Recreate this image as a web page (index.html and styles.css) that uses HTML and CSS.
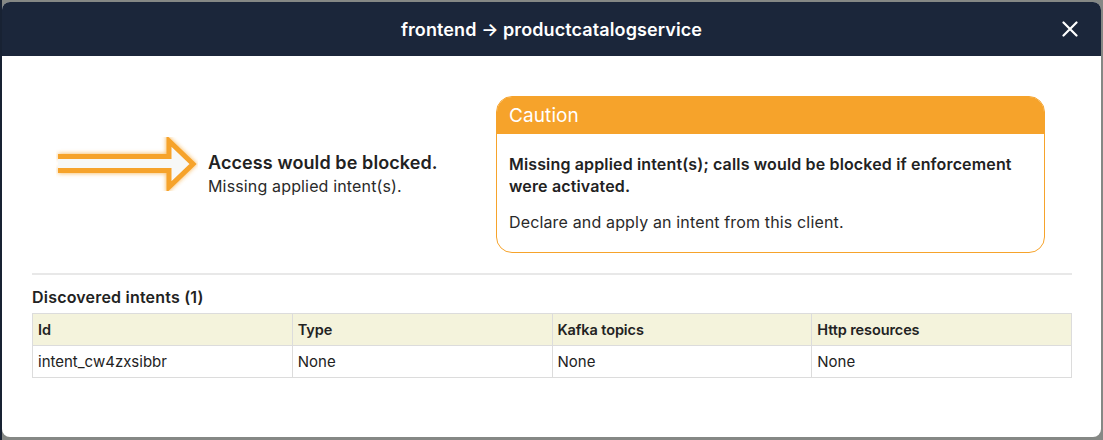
FILE: index.html
```html
<!DOCTYPE html>
<html>
<head>
<meta charset="utf-8">
<link rel="stylesheet" href="styles.css">
</head>
<body>
<div class="backdrop">
  <div class="modal">
    <div class="modal-header">
      <div class="modal-title">frontend → productcatalogservice</div>
      <button class="close" aria-label="Close">
        <svg width="16" height="16" viewBox="0 0 16 16"><path d="M1.5 1.5 L14.5 14.5 M14.5 1.5 L1.5 14.5" stroke="#fff" stroke-width="2.2" stroke-linecap="round"/></svg>
      </button>
    </div>
    <div class="modal-body">
      <div class="top">
        <div class="status">
          <svg class="arrow" width="142" height="54" viewBox="0 0 142 54">
            <defs>
              <filter id="glow" x="-20%" y="-50%" width="140%" height="200%">
                <feGaussianBlur stdDeviation="2"/>
              </filter>
            </defs>
            <path d="M2 19.5 H113 V4 L137 27 L113 50 V33.5 H2" fill="none" stroke="#f6a32b" stroke-width="6" filter="url(#glow)" opacity="0.7"/>
            <path d="M2 19.5 H113 V4 L137 27 L113 50 V33.5 H2" fill="#f7f8f7" stroke="#f6a32b" stroke-width="5"/>
          </svg>
          <div class="status-text">
            <div class="status-title">Access would be blocked.</div>
            <div class="status-sub">Missing applied intent(s).</div>
          </div>
        </div>
        <div class="caution">
          <div class="caution-head">Caution</div>
          <div class="caution-body">
            <p class="caution-strong">Missing applied intent(s); calls would be blocked if enforcement were activated.</p>
            <p class="caution-text">Declare and apply an intent from this client.</p>
          </div>
        </div>
      </div>
      <hr class="divider">
      <h3 class="section-title">Discovered intents (1)</h3>
      <table class="intents">
        <thead>
          <tr><th>Id</th><th>Type</th><th>Kafka topics</th><th>Http resources</th></tr>
        </thead>
        <tbody>
          <tr><td>intent_cw4zxsibbr</td><td>None</td><td>None</td><td>None</td></tr>
        </tbody>
      </table>
    </div>
  </div>
</div>
</body>
</html>
```
FILE: styles.css
```css
html, body {
  margin: 0;
  padding: 0;
}
body {
  width: 1103px;
  height: 440px;
  overflow: hidden;
  background: #858885;
  font-family: Inter, "Noto Sans", sans-serif;
  color: #222;
}
.backdrop {
  padding: 2px 2px 3px 2px;
  background: linear-gradient(90deg, #182233 0, #182233 2px, #858885 2px);
  height: 440px;
  box-sizing: border-box;
}
.modal {
  height: 435px;
  background: #fff;
  border-radius: 8px;
  overflow: hidden;
  display: flex;
  flex-direction: column;
}
.modal-header {
  height: 54px;
  flex: none;
  background: #1b263a;
  display: flex;
  align-items: center;
  justify-content: center;
  position: relative;
}
.modal-title {
  color: #fff;
  font-size: 18px;
  font-weight: 600;
  letter-spacing: 0.1px;
}
.close {
  position: absolute;
  right: 23px;
  top: 19px;
  background: none;
  border: 0;
  padding: 0;
  width: 16px;
  height: 16px;
  display: block;
}
.close svg { display: block; }
.modal-body {
  padding: 40px 29px 0 30px;
}
.top {
  display: flex;
  align-items: flex-start;
  height: 177px;
}
.status {
  display: flex;
  align-items: flex-start;
  margin-top: 41px;
  margin-left: 24px;
  width: 440px;
}
.arrow {
  display: block;
  flex: none;
  margin-right: 10px;
}
.status-text {
  margin-top: 14px;
}
.status-title {
  font-size: 18px;
  font-weight: 600;
  line-height: 24px;
  letter-spacing: 0.1px;
}
.status-sub {
  font-size: 16px;
  line-height: 22px;
  letter-spacing: 0.15px;
  color: #2a2a2a;
}
.caution {
  width: 549px;
  height: 157px;
  box-sizing: border-box;
  border: 1px solid #f6a32b;
  border-radius: 16px;
  overflow: hidden;
}
.caution-head {
  background: #f6a32b;
  color: #fff;
  font-size: 19px;
  line-height: 38px;
  height: 37px;
  padding-left: 12px;
  letter-spacing: 0.1px;
}
.caution-body {
  padding: 19px 12px 0 12px;
}
.caution-body p {
  margin: 0;
  font-size: 16px;
  line-height: 22px;
  letter-spacing: 0.15px;
}
.caution-strong {
  font-weight: 600;
}
.caution-text {
  margin-top: 14px !important;
  color: #2a2a2a;
}
.divider {
  border: 0;
  height: 2px;
  background: #e8e8e8;
  margin: 0;
}
.section-title {
  margin: 12px 0 6px 0;
  font-size: 16px;
  font-weight: 600;
  line-height: 20px;
  letter-spacing: 0.2px;
}
.intents {
  width: 100%;
  border-collapse: collapse;
  table-layout: fixed;
  font-size: 15px;
}
.intents th, .intents td {
  border: 1px solid #dcdcdc;
  text-align: left;
  padding: 0 5px;
  height: 31px;
}
.intents th {
  background: #f4f3dc;
  font-weight: 600;
  font-size: 14.5px;
  letter-spacing: -0.1px;
}
.intents td {
  font-weight: 400;
}
```
